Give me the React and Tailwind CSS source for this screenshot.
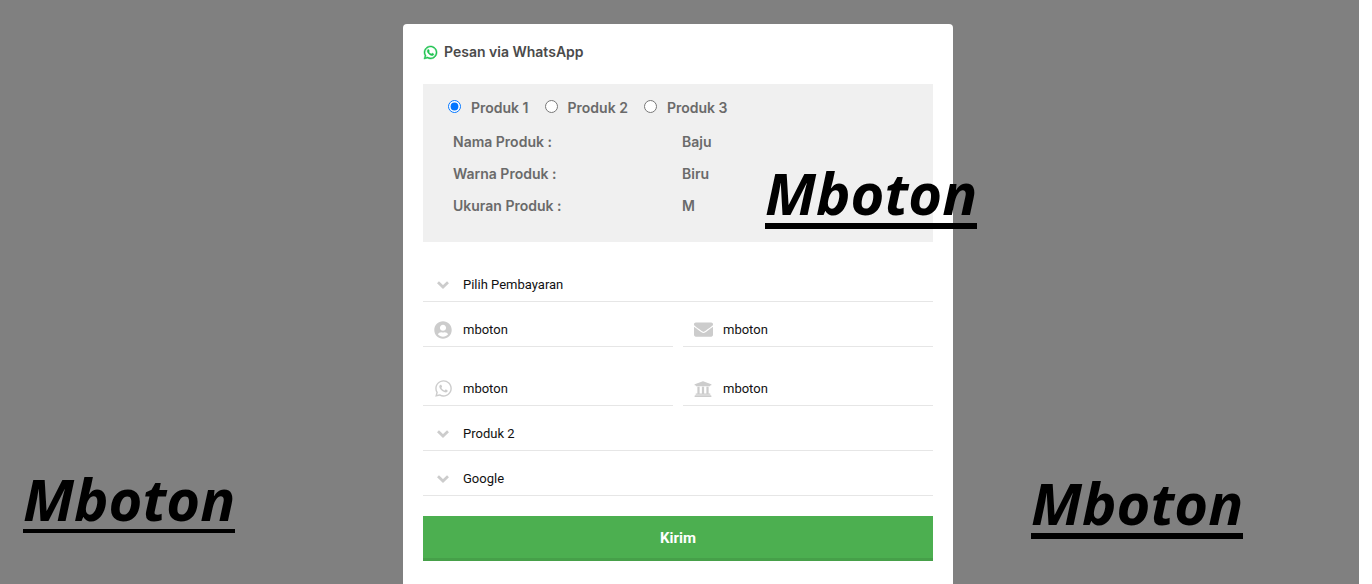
import { FaWhatsapp, FaUserCircle, FaEnvelope, FaUniversity } from "react-icons/fa";

const details = [
  ["Nama Produk :", "Baju"],
  ["Warna Produk :", "Biru"],
  ["Ukuran Produk :", "M"],
];

const control =
  "block h-[35px] w-full appearance-none rounded-none border-b border-[#e6e6e6] bg-transparent pl-10 pr-2 text-[13px] text-[#111] outline-none";

function Chevron() {
  return (
    <svg viewBox="0 0 12 8" className="h-2 w-3" fill="none" stroke="currentColor" strokeWidth="2.8" aria-hidden="true">
      <path d="M1 1.3 6 6l5-4.7" />
    </svg>
  );
}

function Field({ icon, children }) {
  return (
    <div className="relative min-w-0">
      <span className="pointer-events-none absolute inset-y-0 left-0 flex w-10 items-center justify-center text-[#ccc]">
        {icon}
      </span>
      {children}
    </div>
  );
}

function SelectField({ label, options }) {
  return (
    <Field icon={<Chevron />}>
      <select aria-label={label} className={`${control} pt-[2px]`}>
        {options.map((option) => (
          <option key={option}>{option}</option>
        ))}
      </select>
    </Field>
  );
}

function TextField({ label, icon, type = "text" }) {
  return (
    <Field icon={icon}>
      <input type={type} aria-label={label} defaultValue="mboton" className={control} />
    </Field>
  );
}

function Watermark({ className }) {
  return (
    <span
      className={`pointer-events-none absolute border-black font-['Open_Sans',sans-serif] text-[58px] leading-[60px] font-bold text-black italic ${className}`}
    >
      Mboton
    </span>
  );
}

export default function App() {
  return (
    <div className="bg-white pr-[13px] font-['Roboto',sans-serif]">
      <main className="relative flex h-screen justify-center overflow-hidden bg-[#808080] pt-6 pr-[3px]">
        <form
          className="min-h-full w-full max-w-[550px] self-start rounded-t-[4px] bg-white p-5"
          onSubmit={(event) => event.preventDefault()}
        >
          <h1 className="flex h-4 items-center gap-[6px] font-['Inter',sans-serif] text-sm font-semibold text-[#4a4a4a]">
            <FaWhatsapp size={15} className="text-[#1ec250]" stroke="currentColor" strokeWidth={16} />
            Pesan via WhatsApp
          </h1>

          <section className="mt-6 bg-[#f0f0f0] px-[25px] pt-3 pb-5 font-['Inter',sans-serif] text-sm font-semibold text-[#6a6a6a]">
            <fieldset aria-label="Produk" className="flex h-6 items-center gap-4">
              {["Produk 1", "Produk 2", "Produk 3"].map((name, index) => (
                <label key={name} className="flex items-center gap-[10px]">
                  <input type="radio" name="produk" defaultChecked={index === 0} className="mb-1 size-[13px]" />
                  {name}
                </label>
              ))}
            </fieldset>
            <table className="mt-[6px] w-full text-left">
              <tbody>
                {details.map(([name, value]) => (
                  <tr key={name} className="h-8">
                    <th scope="row" className="w-1/2 pl-[5px] font-semibold">{name}</th>
                    <td className="pl-1">{value}</td>
                  </tr>
                ))}
              </tbody>
            </table>
          </section>

          <div className="mt-[25px] flex flex-col gap-[10px]">
            <SelectField label="Pembayaran" options={["Pilih Pembayaran"]} />
            <div className="grid grid-cols-2 gap-x-[10px] gap-y-6">
              <TextField label="Nama" icon={<FaUserCircle size={18} />} />
              <TextField label="Email" icon={<FaEnvelope size={19} />} />
              <TextField label="WhatsApp" icon={<FaWhatsapp size={19} />} />
              <TextField label="Bank" icon={<FaUniversity size={18} />} />
            </div>
            <SelectField label="Produk" options={["Produk 2", "Produk 1", "Produk 3"]} />
            <SelectField label="Sumber" options={["Google"]} />
          </div>

          <button
            type="submit"
            className="mt-5 h-[45px] w-full border-b-[3px] border-[#46a049] bg-[#4caf50] pt-[2px] text-[15px] font-bold text-white"
          >
            Kirim
          </button>
        </form>

        <Watermark className="top-[163px] left-[765px] border-b-[6px]" />
        <Watermark className="top-[469px] left-[23px] border-b-4" />
        <Watermark className="top-[473px] left-[1031px] border-b-[6px]" />
      </main>
    </div>
  );
}
